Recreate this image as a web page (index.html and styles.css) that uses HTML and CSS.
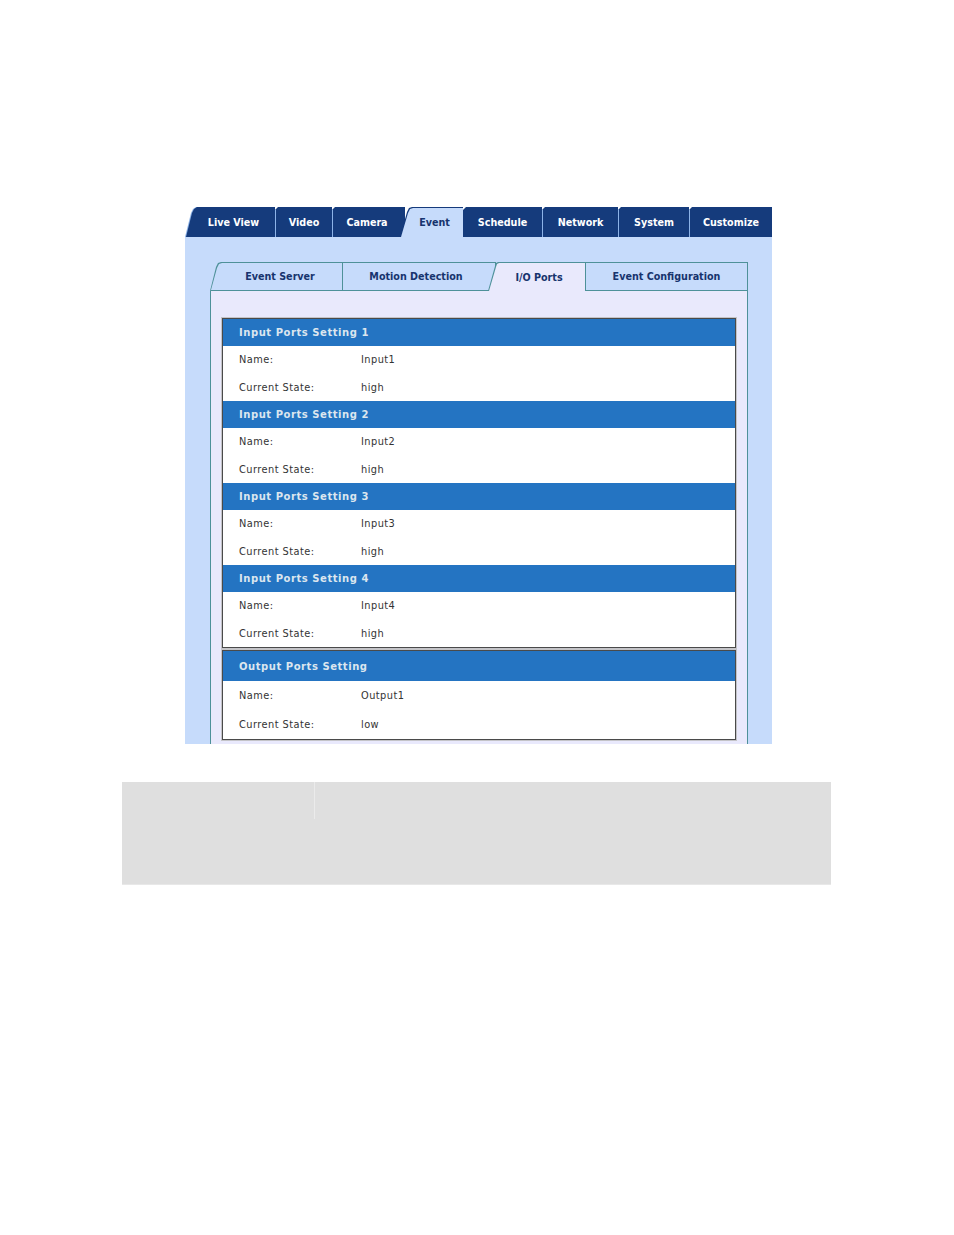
FILE: index.html
```html
<!DOCTYPE html>
<html>
<head>
<meta charset="utf-8">
<link rel="stylesheet" href="styles.css">
</head>
<body>
<div class="page">
  <div class="app">
    <div class="tabs">
      <div class="tab tab-first"><span class="tab-edge"><span class="tab-fill">Live View</span></span></div>
      <div class="tab tab-video">Video</div>
      <div class="tab tab-camera">Camera</div>
      <div class="tab tab-active"><span class="tab-active-fill">Event</span></div>
      <div class="tab tab-schedule">Schedule</div>
      <div class="tab tab-network">Network</div>
      <div class="tab tab-system">System</div>
      <div class="tab tab-customize">Customize</div>
    </div>
    <div class="panel">
      <div class="subtabs">
        <div class="st st-first"><span class="st-first-fill">Event Server</span></div>
        <div class="st st-motion">Motion Detection</div>
        <div class="st-active"><span class="st-active-fill">I/O Ports</span></div>
        <div class="st st-config">Event Configuration</div>
      </div>
      <div class="content">
        <div class="box">
          <div class="sec-head">Input Ports Setting 1</div>
          <div class="row"><span class="label">Name:</span><span class="value">Input1</span></div>
          <div class="row row-b"><span class="label">Current State:</span><span class="value">high</span></div>
          <div class="sec-head">Input Ports Setting 2</div>
          <div class="row"><span class="label">Name:</span><span class="value">Input2</span></div>
          <div class="row row-b"><span class="label">Current State:</span><span class="value">high</span></div>
          <div class="sec-head">Input Ports Setting 3</div>
          <div class="row"><span class="label">Name:</span><span class="value">Input3</span></div>
          <div class="row row-b"><span class="label">Current State:</span><span class="value">high</span></div>
          <div class="sec-head">Input Ports Setting 4</div>
          <div class="row"><span class="label">Name:</span><span class="value">Input4</span></div>
          <div class="row row-b"><span class="label">Current State:</span><span class="value">high</span></div>
        </div>
        <div class="box box-out">
          <div class="sec-head sec-head-out">Output Ports Setting</div>
          <div class="row row-out"><span class="label">Name:</span><span class="value">Output1</span></div>
          <div class="row row-out"><span class="label">Current State:</span><span class="value">low</span></div>
        </div>
      </div>
    </div>
  </div>
  <div class="graybox">
    <div class="gray-cell"></div>
  </div>
</div>
</body>
</html>
```

FILE: styles.css
```css
html, body {
  margin: 0;
  padding: 0;
  background: #ffffff;
}
body {
  font-family: "DejaVu Sans", Verdana, sans-serif;
}
.page {
  padding-top: 207px;
}
.app {
  width: 587px;
  margin-left: 185px;
}

/* main tabs */
.tabs {
  display: flex;
  height: 30px;
}
.tab {
  height: 30px;
  box-sizing: border-box;
  background: #153b7c;
  color: #ffffff;
  font-weight: bold;
  font-size: 9.6px;
  display: flex;
  align-items: center;
  justify-content: center;
  border-left: 1px solid #8db3e8;
  clip-path: polygon(3px 0, 100% 0, 100% 100%, 0 100%, 0 3px);
}
.tab-first {
  width: 90px;
  border-left: none;
  background: #8db3e8;
  clip-path: polygon(0 100%, 6px 6px, 8px 2px, 11px 0, 100% 0, 100% 100%);
  display: block;
  padding: 0;
}
.tab-edge {
  display: block;
  height: 30px;
  padding-left: 1px;
  box-sizing: border-box;
}
.tab-fill {
  display: flex;
  height: 30px;
  align-items: center;
  justify-content: center;
  padding-left: 6px;
  background: #153b7c;
  clip-path: polygon(0 100%, 6px 6px, 8px 2px, 11px 0, 100% 0, 100% 100%);
}
.tab-video { width: 57px; }
.tab-camera { width: 73px; padding-right: 4px; }
.tab-active {
  width: 63px;
  margin-left: -5px;
  border-left: none;
  background: #153b7c;
  clip-path: polygon(0 100%, 7px 5px, 9px 1px, 12px 0, 100% 0, 100% 100%);
  display: block;
  padding: 1px 0 0 0;
}
.tab-active-fill {
  display: flex;
  height: 29px;
  align-items: center;
  justify-content: center;
  padding-left: 6px;
  background: #c6dbfb;
  color: #17346e;
  clip-path: polygon(1px 100%, 8px 5px, 10px 1px, 13px 0, 100% 0, 100% 100%);
}
.tab-schedule { width: 79px; border-left: none; }
.tab-network { width: 76px; }
.tab-system { width: 71px; }
.tab-customize { width: 83px; }

/* panel */
.panel {
  background: #c6dbfb;
  height: 507px;
  box-sizing: border-box;
  padding: 25px 24px 0 25px;
  display: flex;
  flex-direction: column;
}

/* sub tabs */
.subtabs {
  display: flex;
  height: 29px;
}
.st {
  height: 29px;
  box-sizing: border-box;
  background: #c6dbfb;
  border-top: 1px solid #4e9199;
  border-right: 1px solid #4e9199;
  border-bottom: 1px solid #4e9199;
  color: #17346e;
  font-weight: bold;
  font-size: 9.6px;
  display: flex;
  align-items: center;
  justify-content: center;
}
.st-first {
  width: 133px;
  border: none;
  background: #4e9199;
  clip-path: polygon(0 100%, 6px 5px, 8px 1px, 11px 0, 100% 0, 100% 100%);
  padding: 1px 1px 1px 0;
  display: block;
}
.st-first-fill {
  display: flex;
  height: 27px;
  align-items: center;
  justify-content: center;
  padding-left: 8px;
  background: #c6dbfb;
  clip-path: polygon(1px 100%, 7px 5px, 9px 1px, 12px 0, 100% 0, 100% 100%);
}
.st-motion {
  width: 153px;
  padding-right: 6px;
}
.st-active {
  width: 98px;
  margin-left: -8px;
  height: 29px;
  box-sizing: border-box;
  background: #4e9199;
  clip-path: polygon(0 100%, 7px 4px, 8px 1px, 10px 0, 100% 0, 100% 100%);
  padding: 1px 1px 0 0;
  font-weight: bold;
  font-size: 9.6px;
  color: #17346e;
}
.st-active-fill {
  display: flex;
  height: 28px;
  align-items: center;
  justify-content: center;
  padding-left: 5px;
  background: #e9e9fc;
  clip-path: polygon(1px 100%, 8px 4px, 9px 1px, 11px 0, 100% 0, 100% 100%);
}
.st-config {
  width: 162px;
}

/* content */
.content {
  flex: 1;
  background: #e9e9fc;
  border-left: 1px solid #4e9199;
  border-right: 1px solid #4e9199;
  padding: 27px 11px 0 11px;
}
.box {
  background: #ffffff;
  border: 1px solid #4a4a4a;
  outline: 1px solid #c4c4c8;
}
.box-out {
  margin-top: 2px;
}
.sec-head {
  height: 27px;
  background: #2474c2;
  color: #dce6ef;
  font-weight: bold;
  font-size: 10px;
  letter-spacing: 0.55px;
  padding-left: 16px;
  display: flex;
  align-items: center;
}
.sec-head-out {
  height: 30px;
}
.row {
  height: 27px;
  display: flex;
  align-items: center;
  padding-left: 16px;
  font-size: 9.8px;
  letter-spacing: 0.45px;
  color: #333333;
}
.row-b {
  height: 28px;
}
.row-out {
  height: 29px;
}
.label {
  width: 122px;
}
.value {
  color: #333333;
}

/* gray box */
.graybox {
  margin-top: 38px;
  margin-left: 122px;
  width: 709px;
  height: 102px;
  background: #dfdfdf;
  border-bottom: 1px solid #e8e8e8;
}
.gray-cell {
  width: 192px;
  height: 37px;
  border-right: 1px solid #ebebeb;
}
```
